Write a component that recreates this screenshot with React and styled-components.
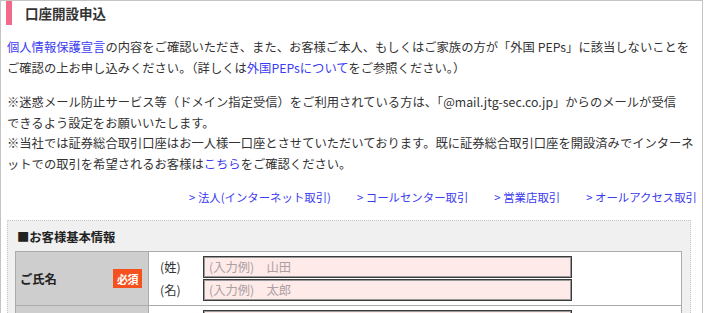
import React from "react";
import styled, { createGlobalStyle } from "styled-components";

const GlobalStyle = createGlobalStyle`
  html, body { margin: 0; padding: 0; background: #fff; }
  body {
    font-family: "Noto Sans CJK JP", "Noto Sans", sans-serif;
    color: #333;
  }
  * { box-sizing: border-box; }
`;

const Frame = styled.div`
  width: 703px;
  border: 1px solid #c4c4c4;
  border-bottom: none;
  padding-bottom: 20px;
`;

const Heading = styled.h2`
  margin: 0 0 0 5px;
  height: 24px;
  line-height: 24px;
  border-left: 6px solid #f3698a;
  padding-left: 13px;
  font-size: 13.5px;
  font-weight: 700;
  color: #333;
`;

const Body = styled.div`
  padding: 0 5px 0 6px;
`;

const Para = styled.p`
  margin: ${(p) => p.$top}px 0 0;
  font-size: 12.3px;
  line-height: 20.5px;
  white-space: nowrap;
`;

const Link = styled.a`
  color: #3b3bef;
  text-decoration: none;
`;

const LinkRow = styled.ul`
  list-style: none;
  margin: 15px 0 0;
  padding: 0;
  display: flex;
  justify-content: flex-end;
  gap: 26px;
  font-size: 11.4px;
  line-height: 16px;
`;

const LinkItem = styled.li`
  white-space: nowrap;
  color: #3b3bef;
`;

const FormBox = styled.section`
  margin: 15px 6px 0 0;
  background: #f0f0f0;
  border: 1px dotted #c8c8c8;
  padding: 6px 8px 0 7px;
`;

const SectionTitle = styled.h3`
  margin: 0 0 4px 2px;
  font-size: 12.3px;
  line-height: 20px;
  font-weight: 700;
  color: #222;
`;

const Table = styled.div`
  display: grid;
  grid-template-columns: 133px 1fr;
  border-top: 1px solid #ababab;
  border-left: 1px solid #ababab;
  background: #fff;
`;

const LabelCell = styled.div`
  background: #cecece;
  border-right: 1px solid #ababab;
  border-bottom: 1px solid #ababab;
  display: flex;
  align-items: center;
  justify-content: space-between;
  padding: 0 6px 0 4px;
  font-size: 12.3px;
  font-weight: 700;
  color: #222;
`;

const Badge = styled.span`
  display: inline-flex;
  align-items: center;
  justify-content: center;
  width: 29px;
  height: 19px;
  background: #f4511e;
  color: #fff;
  font-size: 11px;
  font-weight: 700;
  letter-spacing: -0.5px;
`;

const ValueCell = styled.div`
  border-right: 1px solid #ababab;
  border-bottom: 1px solid #ababab;
  padding: 4px 0 4px 11px;
  display: flex;
  flex-direction: column;
  gap: 1px;
`;

const NameLine = styled.label`
  display: flex;
  align-items: center;
  font-size: 12.3px;
  color: #333;
`;

const NameTag = styled.span`
  width: 43px;
  flex: none;
`;

const TextInput = styled.input`
  width: 369px;
  height: 22px;
  border: 1px solid #3a3a3a;
  box-shadow: inset 0 0 0 1px #9a9a9a;
  background: #ffeaea;
  padding: 0 5px;
  font-family: "Noto Sans CJK JP", sans-serif;
  font-size: 12.3px;
  color: #333;
  outline: none;
  &::placeholder { color: #ab9f9f; }
`;

const rows = [
  {
    label: "ご氏名",
    fields: [
      ["(姓)", "(入力例)　山田"],
      ["(名)", "(入力例)　太郎"],
    ],
  },
  {
    label: "フリガナ",
    fields: [
      ["(セイ)", "(入力例)　ヤマダ"],
      ["(メイ)", "(入力例)　タロウ"],
    ],
  },
];

const links = [
  "法人(インターネット取引)",
  "コールセンター取引",
  "営業店取引",
  "オールアクセス取引",
];

export default function App() {
  return (
    <>
      <GlobalStyle />
      <Frame>
        <Heading>口座開設申込</Heading>
        <Body>
          <Para $top={12}>
            <Link href="#">個人情報保護宣言</Link>
            の内容をご確認いただき、また、お客様ご本人、もしくはご家族の方が「外国 PEPs」に該当しないことを
            <br />
            ご確認の上お申し込みください。（詳しくは<Link href="#">外国PEPsについて</Link>をご参照ください。）
          </Para>
          <Para $top={14}>
            ※迷惑メール防止サービス等（ドメイン指定受信）をご利用されている方は、「@mail.jtg-sec.co.jp」からのメールが受信
            <br />
            できるよう設定をお願いいたします。
            <br />
            ※当社では証券総合取引口座はお一人様一口座とさせていただいております。既に証券総合取引口座を開設済みでインターネ
            <br />
            ットでの取引を希望されるお客様は<Link href="#">こちら</Link>をご確認ください。
          </Para>
          <LinkRow>
            {links.map((l) => (
              <LinkItem key={l}>{"> "}{l}</LinkItem>
            ))}
          </LinkRow>
          <FormBox>
            <SectionTitle>■お客様基本情報</SectionTitle>
            <Table>
              {rows.map((r) => (
                <React.Fragment key={r.label}>
                  <LabelCell>
                    <span>{r.label}</span>
                    <Badge>必須</Badge>
                  </LabelCell>
                  <ValueCell>
                    {r.fields.map(([tag, ph]) => (
                      <NameLine key={tag}>
                        <NameTag>{tag}</NameTag>
                        <TextInput type="text" placeholder={ph} />
                      </NameLine>
                    ))}
                  </ValueCell>
                </React.Fragment>
              ))}
            </Table>
          </FormBox>
        </Body>
      </Frame>
    </>
  );
}
